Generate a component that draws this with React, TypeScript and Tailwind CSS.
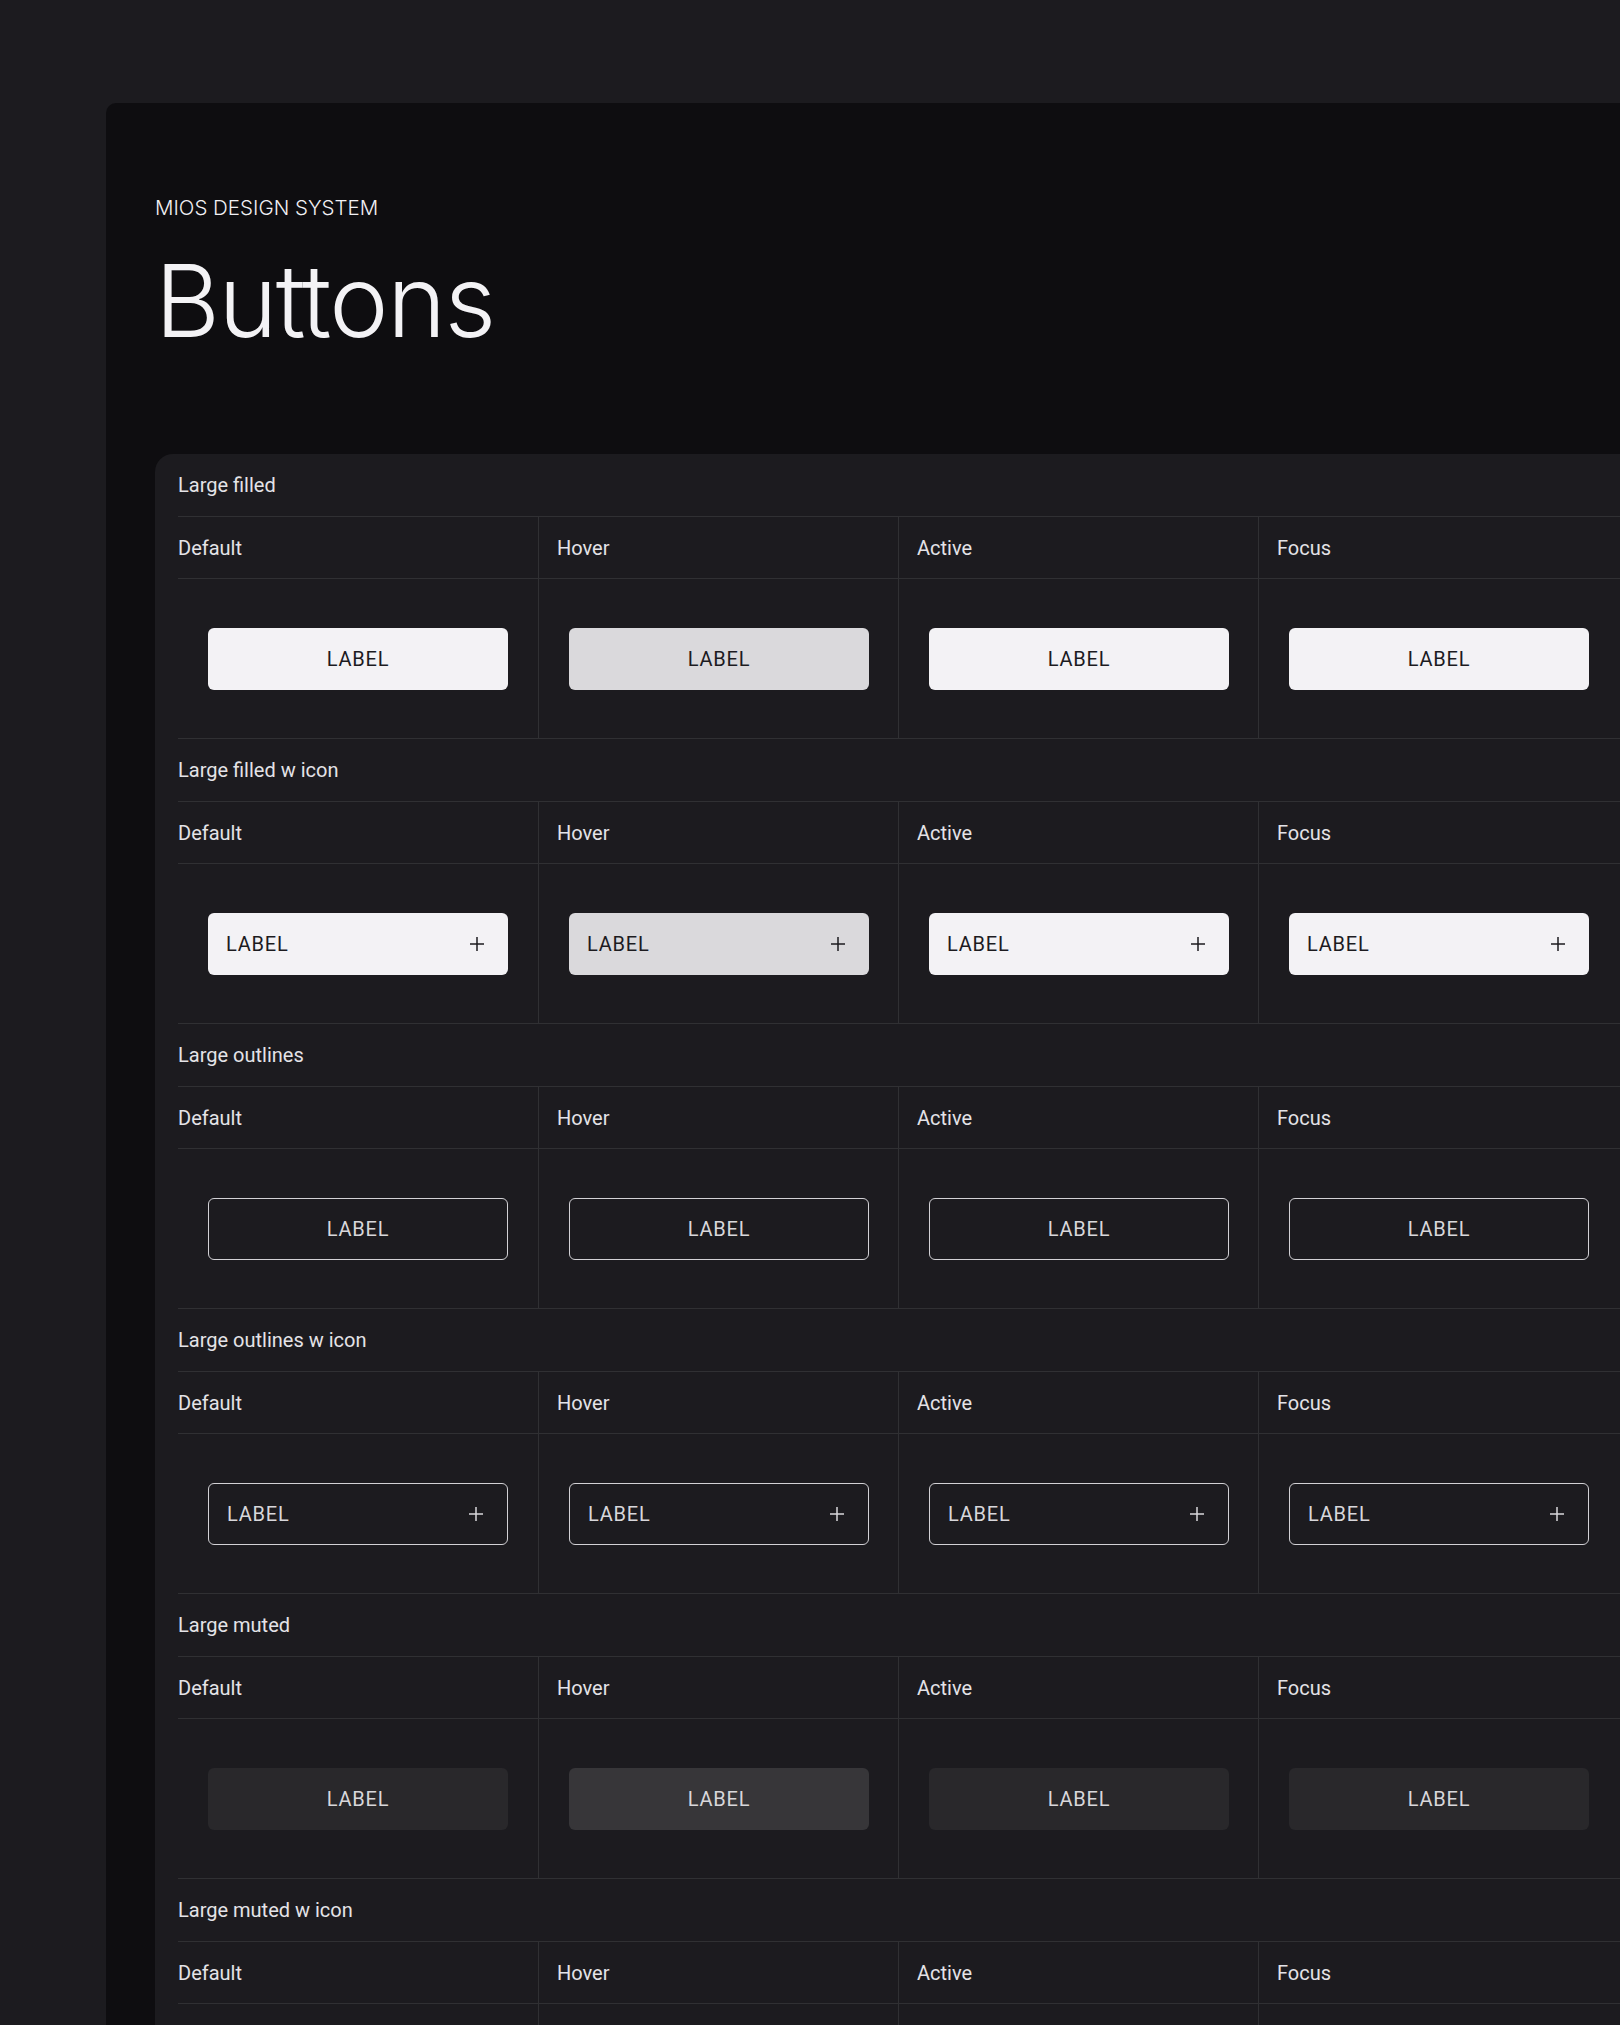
import React from "react";

type Variant = "filled" | "outline" | "muted";
type State = "Default" | "Hover" | "Active" | "Focus";

const STATES: State[] = ["Default", "Hover", "Active", "Focus"];

const SECTIONS: { title: string; variant: Variant; icon: boolean }[] = [
  { title: "Large filled", variant: "filled", icon: false },
  { title: "Large filled w icon", variant: "filled", icon: true },
  { title: "Large outlines", variant: "outline", icon: false },
  { title: "Large outlines w icon", variant: "outline", icon: true },
  { title: "Large muted", variant: "muted", icon: false },
  { title: "Large muted w icon", variant: "muted", icon: true },
];

function buttonClass(variant: Variant, state: State) {
  if (variant === "filled") {
    return state === "Hover"
      ? "bg-[#dad9dc] text-[#1c1b1f]"
      : "bg-[#f3f2f5] text-[#1c1b1f]";
  }
  if (variant === "outline") {
    return "border-[1.5px] border-[#d2d1d5] text-[#d8d7db]";
  }
  return state === "Hover"
    ? "bg-[#373639] text-[#d8d7db]"
    : "bg-[#29282b] text-[#d8d7db]";
}

function PlusIcon() {
  return (
    <svg width="14" height="14" viewBox="0 0 14 14" fill="none" className="shrink-0">
      <path d="M7 0v14M0 7h14" stroke="currentColor" strokeWidth="1.5" />
    </svg>
  );
}

function DemoButton({ variant, state, icon }: { variant: Variant; state: State; icon: boolean }) {
  return (
    <button
      className={`flex h-[62px] w-[300px] items-center rounded-[6px] text-[20px] tracking-[0.04em] ${
        icon ? "justify-between pl-[18px] pr-[24px]" : "justify-center"
      } ${buttonClass(variant, state)}`}
    >
      <span>LABEL</span>
      {icon && <PlusIcon />}
    </button>
  );
}

function Section({ title, variant, icon }: { title: string; variant: Variant; icon: boolean }) {
  return (
    <div>
      {/* Section title */}
      <div className="flex h-[63px] items-center border-b border-[#303033] text-[20px] text-[#e4e3e7]">
        {title}
      </div>

      {/* State headers */}
      <div className="flex border-b border-[#303033]">
        {STATES.map((s, i) => (
          <div
            key={s}
            className={`flex h-[61px] w-[360px] shrink-0 items-center text-[20px] text-[#e4e3e7] ${
              i > 0 ? "border-l border-[#303033] pl-[18px]" : ""
            }`}
          >
            {s}
          </div>
        ))}
      </div>

      {/* Buttons */}
      <div className="flex border-b border-[#303033]">
        {STATES.map((s, i) => (
          <div
            key={s}
            className={`flex h-[159px] w-[360px] shrink-0 items-center pl-[30px] ${
              i > 0 ? "border-l border-[#303033]" : ""
            }`}
          >
            <DemoButton variant={variant} state={s} icon={icon} />
          </div>
        ))}
      </div>
    </div>
  );
}

export default function App() {
  return (
    <div
      className="h-[2025px] w-[1620px] overflow-hidden bg-[#1c1b1f] pl-[106px] pt-[103px]"
      style={{ fontFamily: "Roboto, 'Liberation Sans', sans-serif" }}
    >
      <div className="w-[1700px] rounded-tl-[10px] bg-[#0e0d10] pl-[49px] pt-[92px]">
        {/* Header */}
        <div style={{ fontFamily: "Inter, 'Liberation Sans', sans-serif" }}>
          <div className="text-[20.5px] font-light leading-[26px] text-[#f1f0f4]">MIOS DESIGN SYSTEM</div>
          <h1 className="mt-[30px] text-[100px] font-light leading-[100px] tracking-[-0.015em] text-[#f3f2f5]">
            Buttons
          </h1>
        </div>

        {/* Panel */}
        <div className="mt-[103px] rounded-tl-[18px] bg-[#1c1b1f] pl-[23px]">
          {SECTIONS.map((sec) => (
            <Section key={sec.title} {...sec} />
          ))}
        </div>
      </div>
    </div>
  );
}
